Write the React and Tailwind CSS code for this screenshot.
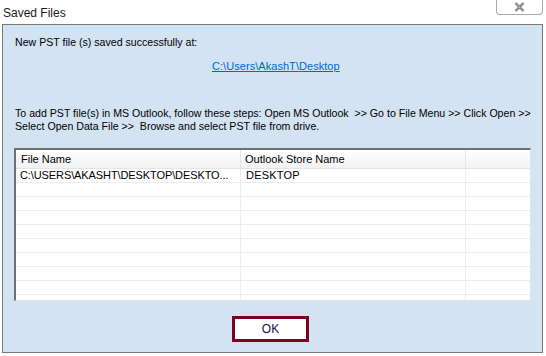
export default function App() {
  const rows = Array.from({ length: 10 });

  return (
    <div className="w-[546px] h-[356px] bg-white overflow-hidden font-['Liberation_Sans',Arial,sans-serif] text-black">
      <div className="h-[24px] flex justify-between items-start">
        <div className="pl-[3px] pt-[4px] text-[12px] text-[#1a1a1a]">Saved Files</div>
        <button
          type="button"
          className="mr-[3px] w-[47px] h-[15px] border border-t-0 border-[#a9a9a9] rounded-b-[4px] bg-white flex items-center justify-center"
        >
          <svg width="11" height="10" viewBox="0 0 11 10">
            <path d="M1.5 1 L9.5 9 M9.5 1 L1.5 9" stroke="#5a5a5a" strokeWidth="2.2" />
            <path d="M1.5 1 L9.5 9 M9.5 1 L1.5 9" stroke="#e8e8e8" strokeWidth="0.8" />
          </svg>
        </button>
      </div>

      <div className="ml-[2px] mr-[3px] h-[329px] border border-[#7a7a7a] bg-[#d4e3f2] flex flex-col text-[10.6px] leading-[13px]">
        <div className="pl-[12px] pt-[11px]">New PST file (s) saved successfully at:</div>
        <div className="pl-[209px] pt-[11px]">
          <span className="text-[#0066cc] underline text-[11px] tracking-[0.05px]">C:\Users\AkashT\Desktop</span>
        </div>
        <div className="pl-[12px] pt-[34px] whitespace-pre">
          {"To add PST file(s) in MS Outlook, follow these steps: Open MS Outlook  >> Go to File Menu >> Click Open >>"}
        </div>
        <div className="pl-[12px] whitespace-pre">{"Select Open Data File >>  Browse and select PST file from drive."}</div>

        <div className="ml-[11px] mt-[15px] w-[517px] h-[153px] bg-white border-t-2 border-l-2 border-t-[#6f6f6f] border-l-[#6f6f6f] border-r border-b border-r-[#e3e3e3] border-b-[#e3e3e3] overflow-hidden">
          <div className="flex h-[19px] bg-gradient-to-b from-white to-[#f2f2f2] border-b border-[#e5e5e5] text-[11px] items-center">
            <div className="w-[225px] h-full pl-[5px] flex items-center border-r border-[#e5e5e5]">File Name</div>
            <div className="w-[225px] h-full pl-[4px] flex items-center border-r border-[#e5e5e5]">Outlook Store Name</div>
            <div className="flex-1" />
          </div>
          {rows.map((_, i) => (
            <div key={i} className="flex h-[14px] border-b border-[#ededed] items-center">
              <div className="w-[225px] h-full pl-[4px] border-r border-[#ededed] flex items-center text-[11px] tracking-[-0.1px]">
                {i === 0 ? "C:\\USERS\\AKASHT\\DESKTOP\\DESKTO..." : ""}
              </div>
              <div className="w-[225px] h-full pl-[5px] border-r border-[#ededed] flex items-center text-[11px] tracking-[0.2px]">
                {i === 0 ? "DESKTOP" : ""}
              </div>
              <div className="flex-1" />
            </div>
          ))}
        </div>

        <div className="pl-[229px] pt-[15px]">
          <button
            type="button"
            className="w-[77px] h-[26px] border-[3px] border-[#800020] bg-white text-[12px] text-[#101050] flex items-center justify-center"
          >
            OK
          </button>
        </div>
      </div>
    </div>
  );
}
